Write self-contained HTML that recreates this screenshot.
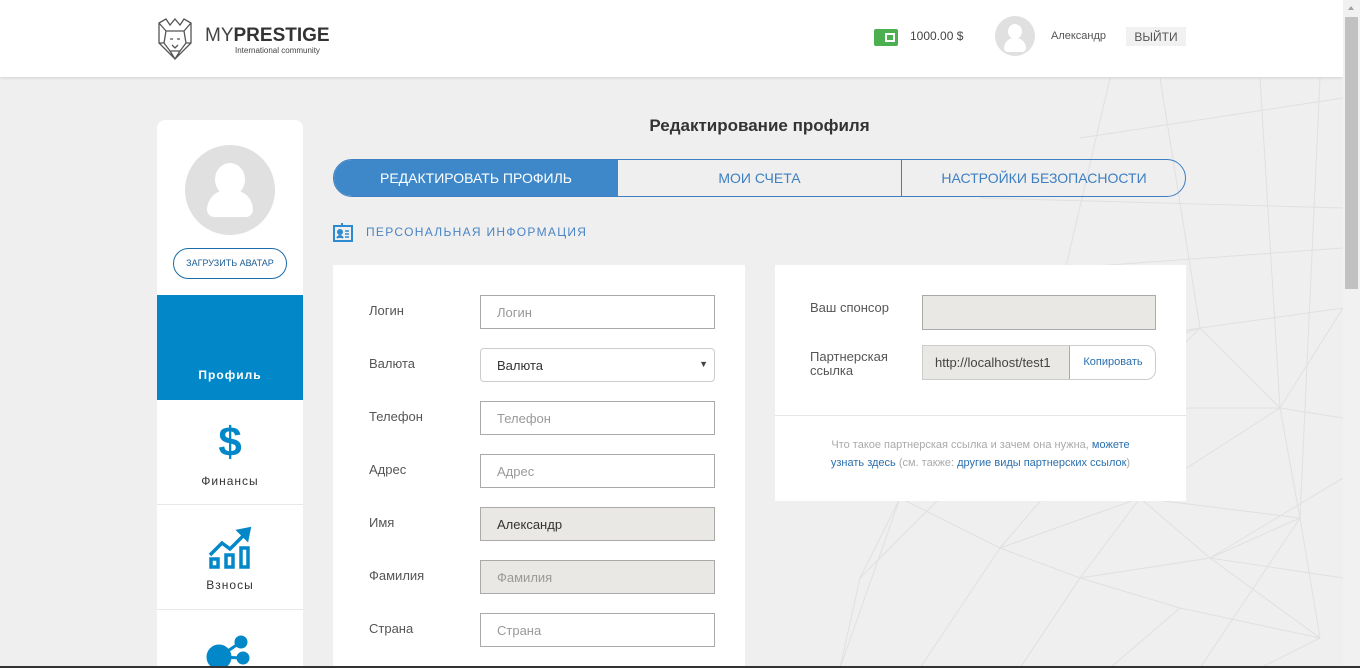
<!DOCTYPE html>
<html style="width:1360px;height:668px;overflow:hidden"><head><meta charset="utf-8"><style>
*{box-sizing:border-box;margin:0;padding:0}
body{width:1360px;height:668px;overflow:hidden;background:#efefef;font-family:"Liberation Sans","DejaVu Sans",sans-serif;position:relative}
.abs{position:absolute}
.hdr{left:0;top:0;width:1343px;height:77px;background:#fff;box-shadow:0 1px 3px rgba(0,0,0,.12)}
.sb{left:1343px;top:0;width:17px;height:668px;background:#f1f1f1}
.side{left:157px;top:120px;width:146px;height:548px;background:#fff;border-radius:8px 8px 0 0;overflow:hidden}
.lbl{font-size:13px;color:#555}
.inp{position:absolute;left:480px;width:235px;height:34px;border:1px solid #aaa;background:#fff;font-size:13px;color:#999;padding:9px 16px}
.card{background:#fff}
</style></head><body>
<svg class="abs" style="left:780px;top:78px" width="563" height="590" stroke="#e0e0e0" stroke-width="1" fill="none">
<path d="M60 590 L120 420 L260 300 L420 250 L563 230 M80 500 L200 380 L340 330 L500 330 L563 340 M140 590 L220 470 L360 420 L520 440 M240 590 L300 500 L430 480 L563 500 M330 590 L400 530 L540 560 M120 420 L220 470 L300 500 L400 530 M260 300 L340 330 L360 420 L430 480 L540 560 M420 250 L500 330 L520 440 L540 560 M200 380 L260 300 M340 330 L420 250 M500 330 L563 230 M360 420 L500 330 M430 480 L520 440 M300 500 L360 420 M220 470 L340 330 M380 0 L420 250 M480 0 L500 330 M300 60 L563 20 M200 120 L563 130 M150 200 L563 170 M330 0 L260 300 M540 0 L520 440 M100 300 L420 250 M60 590 L80 500 L120 420 M563 400 L430 480 M480 590 L540 560 M420 590 L520 440"/>
</svg>
<div class="abs hdr"></div>
<div class="abs sb"><div class="abs" style="left:2px;top:17px;width:13px;height:272px;background:#c1c1c1"></div><div class="abs" style="left:5px;top:6px;border:3px solid transparent;border-bottom:4px solid #a3a3a3;border-top:0"></div></div>
<svg class="abs" style="left:156px;top:17px" width="38" height="44" viewBox="0 0 38 44" fill="none" stroke="#555" stroke-width="1.3"><path d="M3 6 L10 2 L14 8 L19 2 L24 8 L28 2 L35 6 L35 26 L19 42 L3 26 Z M10 14 L28 14 L30 26 L24 34 L14 34 L8 26 Z M14 22 L17 22 M21 22 L24 22 M16 28 L19 31 L22 28 M3 6 L10 14 M35 6 L28 14 M3 26 L8 26 M35 26 L30 26 M14 34 L19 42 L24 34"/></svg>
<div class="abs" style="left:205px;top:25px;font-size:19px;color:#444;line-height:22px">MY<b style="color:#333">PRESTIGE</b></div>
<div class="abs" style="left:235px;top:46px;font-size:8px;color:#444">International community</div>
<div class="abs" style="left:874px;top:29px;width:24px;height:17px;background:#4caf50;border-radius:2px"></div>
<div class="abs" style="left:885px;top:33px;width:10px;height:9px;border:2px solid #fff;background:#4caf50"></div>
<div class="abs" style="left:910px;top:29px;font-size:12px;color:#444">1000.00 $</div>
<div class="abs" style="left:995px;top:16px;width:40px;height:40px;border-radius:50%;background:#e0e0e0;overflow:hidden">
<div class="abs" style="left:13px;top:8px;width:14px;height:15px;border-radius:50%;background:#fff"></div>
<div class="abs" style="left:9px;top:22px;width:22px;height:14px;border-radius:11px 11px 4px 4px;background:#fff"></div></div>
<div class="abs" style="left:1051px;top:30px;font-size:11px;color:#555">Александр</div>
<div class="abs" style="left:1126px;top:27px;width:60px;height:19px;background:#f1f1f1;font-size:12px;color:#555;text-align:center;line-height:20px">ВЫЙТИ</div>
<div class="abs side">
<div class="abs" style="left:28px;top:25px;width:90px;height:90px;border-radius:50%;background:#e0e0e0;overflow:hidden">
<div class="abs" style="left:30px;top:18px;width:30px;height:33px;border-radius:50%;background:#fff"></div>
<div class="abs" style="left:22px;top:45px;width:46px;height:27px;border-radius:22px 22px 8px 8px;background:#fff"></div></div>
<div class="abs" style="left:16px;top:128px;width:114px;height:31px;border:1px solid #1b6ca8;border-radius:16px;font-size:9px;color:#1b5c94;text-align:center;line-height:29px">ЗАГРУЗИТЬ АВАТАР</div>
<div class="abs" style="left:0;top:175px;width:146px;height:105px;background:#0288c9;color:#fff;font-size:12px;text-align:center;padding-top:73px;letter-spacing:1px;font-weight:bold">Профиль</div>
<div class="abs" style="left:0;top:280px;width:146px;height:105px;border-bottom:1px solid #e8e8e8;text-align:center">
<div style="font-size:42px;color:#0288c9;font-weight:bold;margin-top:21px;line-height:42px">$</div>
<div style="font-size:12px;color:#333;letter-spacing:1px;margin-top:11px">Финансы</div></div>
<div class="abs" style="left:0;top:385px;width:146px;height:105px;border-bottom:1px solid #e8e8e8;text-align:center">
<svg style="margin-top:20px" width="44" height="44" viewBox="0 0 44 44" fill="none" stroke="#0288c9" stroke-width="3.5"><path d="M2 30 L14 18 L22 24 L38 8"/><path d="M31 6 L41 4 L39 14 Z" fill="#0288c9"/><rect x="3" y="34" width="7" height="8"/><rect x="18" y="30" width="7" height="12"/><rect x="33" y="23" width="7" height="19"/></svg>
<div style="font-size:12px;color:#333;letter-spacing:1px;margin-top:4px">Взносы</div></div>
<svg class="abs" style="left:48px;top:512px" width="50" height="40" viewBox="0 0 50 40" fill="#0288c9" stroke="#0288c9" stroke-width="3"><circle cx="14" cy="25" r="11"/><circle cx="36" cy="10" r="5"/><circle cx="38" cy="26" r="5"/><path d="M14 25 L36 10 M14 25 L38 26"/></svg>
</div>
<div class="abs" style="left:333px;top:116px;width:853px;text-align:center;font-size:17px;color:#333;font-weight:bold">Редактирование профиля</div>
<div class="abs" style="left:333px;top:159px;width:853px;height:38px;border:1px solid #3d7fc1;border-radius:19px;overflow:hidden;font-size:14px;color:#3d7fc1">
<div class="abs" style="left:0;top:0;width:284px;height:36px;background:#3e88c9;color:#fff;text-align:center;line-height:36px">РЕДАКТИРОВАТЬ ПРОФИЛЬ</div>
<div class="abs" style="left:284px;top:0;width:284px;height:36px;border-right:1px solid #3d7fc1;text-align:center;line-height:36px">МОИ СЧЕТА</div>
<div class="abs" style="left:568px;top:0;width:284px;height:36px;text-align:center;line-height:36px">НАСТРОЙКИ БЕЗОПАСНОСТИ</div></div>
<svg class="abs" style="left:333px;top:222px" width="20" height="20" viewBox="0 0 20 20" fill="none" stroke="#2d8ad0" stroke-width="2"><rect x="1" y="4" width="18" height="15"/><path d="M9 1 L9 5" /><circle cx="7" cy="10" r="2" fill="#2d8ad0"/><path d="M4 16 Q7 12 10 16" fill="#2d8ad0"/><path d="M12 9 H16 M12 12 H16 M12 15 H16" stroke-width="1.5"/></svg>
<div class="abs" style="left:366px;top:225px;font-size:12px;color:#4a84c4;letter-spacing:1.3px">ПЕРСОНАЛЬНАЯ ИНФОРМАЦИЯ</div>
<div class="abs card" style="left:333px;top:265px;width:412px;height:403px"></div>
<div class="abs lbl" style="left:369px;top:303px">Логин</div><div class="inp" style="top:295px">Логин</div>
<div class="abs lbl" style="left:369px;top:356px">Валюта</div><div class="inp" style="top:348px;border-color:#ccc;border-radius:4px;color:#333">Валюта<span style="position:absolute;right:6px;top:10px;font-size:9px;color:#444">▼</span></div>
<div class="abs lbl" style="left:369px;top:409px">Телефон</div><div class="inp" style="top:401px">Телефон</div>
<div class="abs lbl" style="left:369px;top:462px">Адрес</div><div class="inp" style="top:454px">Адрес</div>
<div class="abs lbl" style="left:369px;top:515px">Имя</div><div class="inp" style="top:507px;background:#e9e8e4;color:#333">Александр</div>
<div class="abs lbl" style="left:369px;top:568px">Фамилия</div><div class="inp" style="top:560px;background:#e9e8e4">Фамилия</div>
<div class="abs lbl" style="left:369px;top:621px">Страна</div><div class="inp" style="top:613px">Страна</div>
<div class="abs card" style="left:775px;top:265px;width:411px;height:236px"></div>
<div class="abs lbl" style="left:810px;top:300px">Ваш спонсор</div>
<div class="abs" style="left:922px;top:295px;width:234px;height:35px;background:#e9e8e4;border:1px solid #aaa"></div>
<div class="abs lbl" style="left:810px;top:350px;line-height:14px">Партнерская<br>ссылка</div>
<div class="abs" style="left:922px;top:345px;width:234px;height:35px;border:1px solid #ccc;border-radius:0 10px 10px 0;overflow:hidden">
<div class="abs" style="left:-1px;top:-1px;width:148px;height:35px;background:#e9e8e4;border:1px solid #aaa;font-size:13px;color:#444;line-height:33px;padding-left:12px;white-space:nowrap;overflow:hidden">http://localhost/test1</div>
<div class="abs" style="left:147px;top:0;width:86px;height:33px;font-size:11px;color:#2a6fae;text-align:center;line-height:33px">Копировать</div></div>
<div class="abs" style="left:775px;top:415px;width:411px;height:1px;background:#e6e6e6"></div>
<div class="abs" style="left:775px;top:436px;width:411px;text-align:center;font-size:11px;line-height:18px;color:#aaa">Что такое партнерская ссылка и зачем она нужна, <span style="color:#2a6fae">можете</span><br><span style="color:#2a6fae">узнать здесь</span> (см. также: <span style="color:#2a6fae">другие виды партнерских ссылок</span>)</div>
<div class="abs" style="left:480px;top:666px;width:235px;height:2px;background:#aaa"></div>
<div class="abs" style="left:0;top:666px;width:1360px;height:2px;background:#333"></div>
</body></html>
